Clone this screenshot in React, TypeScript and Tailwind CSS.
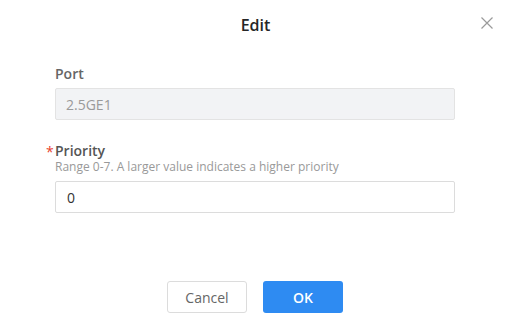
import React from "react";

export default function App() {
  return (
    <div
      className="relative w-[511px] h-[334px] bg-white text-[#333]"
      style={{ fontFamily: '"Open Sans", "Liberation Sans", sans-serif' }}
    >
      <div className="pt-[13px] h-[37px] flex justify-center">
        <div className="text-[16px] leading-[24px] font-semibold text-[#262626]">Edit</div>
      </div>
      <button className="absolute left-[481px] top-[17px] w-[12px] h-[12px]" aria-label="close">
        <svg width="12" height="12" viewBox="0 0 12 12">
          <path d="M0.5 0.5 L11.5 11.5 M11.5 0.5 L0.5 11.5" stroke="#9a9a9a" strokeWidth="1.2" fill="none" />
        </svg>
      </button>

      <div className="pl-[55px] pr-[56px]">
        <div className="mt-[27px] text-[14px] leading-[20px] font-semibold text-[#666]">Port</div>
        <div className="mt-[4px] h-[32px] border border-[#e3e3e3] bg-[#f2f3f5] rounded-[2px] flex items-center px-[10px] text-[14px] text-[#9a9a9a]">
          2.5GE1
        </div>

        <div className="relative mt-[22px] text-[14px] leading-[17px] font-semibold text-[#555]">
          <span className="absolute left-[-9px] top-[1px] text-[#e8412e] font-normal">*</span>
          Priority
        </div>
        <div className="mt-[1px] text-[12px] leading-[14px] text-[#999]">
          Range 0-7. A larger value indicates a higher priority
        </div>
        <div className="mt-[7px] h-[32px] border border-[#dcdcdc] bg-white rounded-[2px] flex items-center px-[11px] text-[14px] text-[#333]">
          0
        </div>
      </div>

      <div className="mt-[68px] flex justify-center gap-4 pr-[1px]">
        <button className="w-20 h-[32px] border border-[#dcdcdc] rounded-[3px] bg-white text-[14px] text-[#666]">
          Cancel
        </button>
        <button className="w-20 h-[32px] rounded-[3px] bg-[#2e8bf2] text-[14px] font-semibold text-white">
          OK
        </button>
      </div>
    </div>
  );
}
